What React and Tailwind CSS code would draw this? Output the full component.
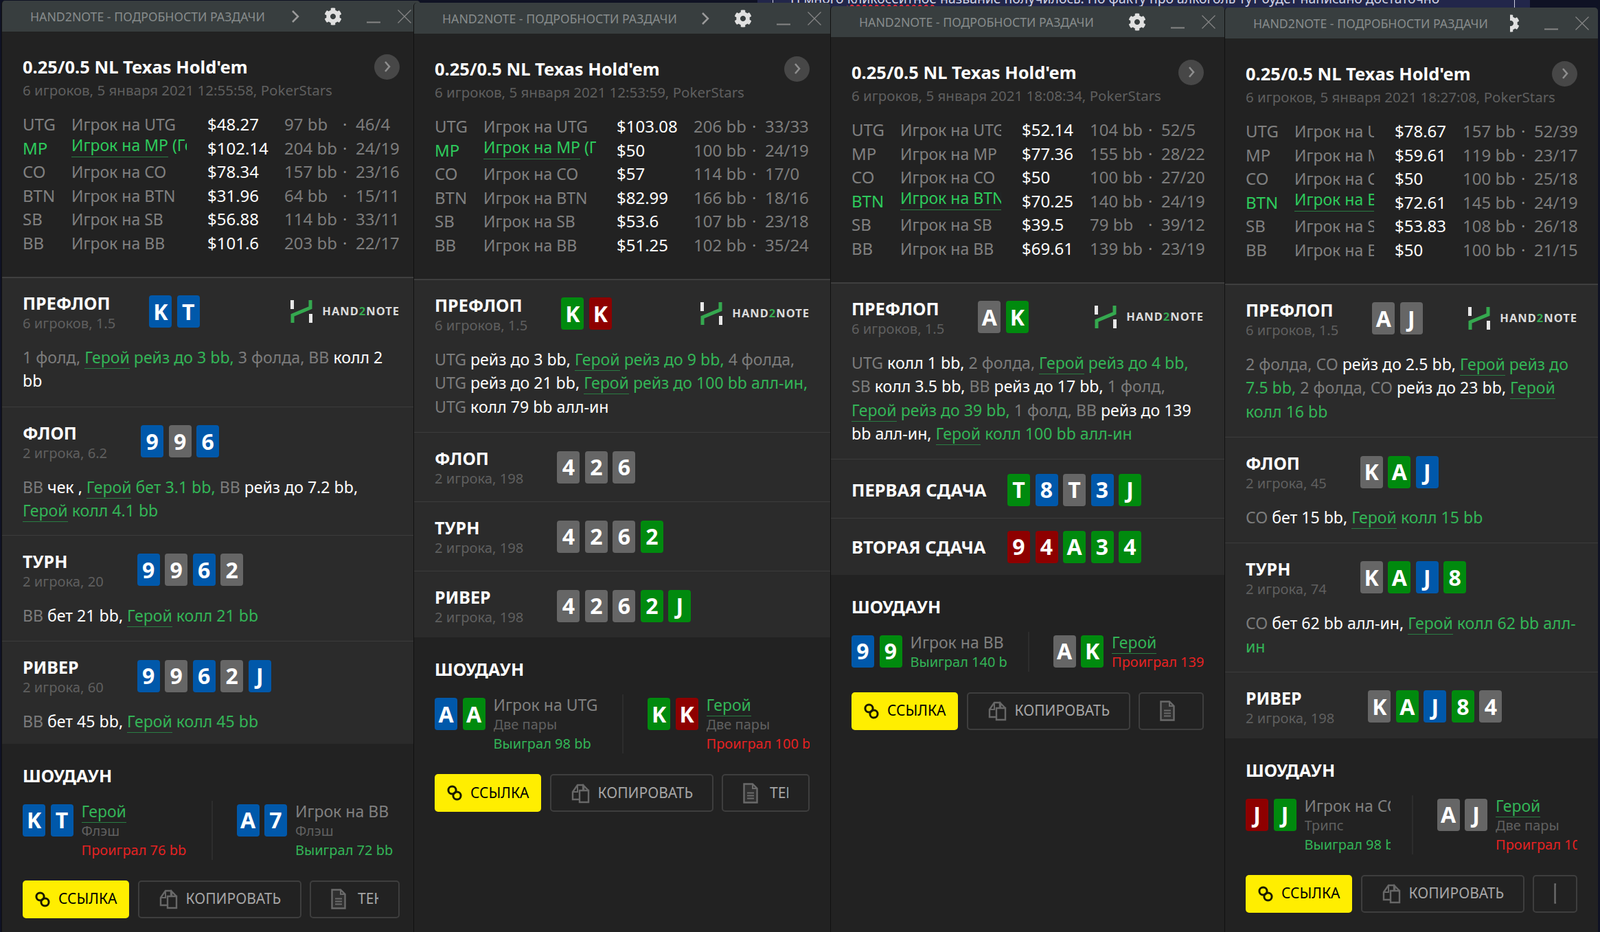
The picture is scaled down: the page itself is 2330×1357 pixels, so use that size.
import React from 'react';
import { FaCog } from 'react-icons/fa';

const BG = { b: 'bg-[#0058aa]', g: 'bg-[#666666]', v: 'bg-[#008a0e]', r: 'bg-[#8e0000]' };

function Card({ c }) {
  const [t, k] = c.split(':');
  return (
    <div className={`w-[33px] h-[47px] shrink-0 rounded-[4px] flex items-center justify-center text-white font-bold text-[32px] font-['DejaVu_Sans',sans-serif] ${BG[k]}`}>{t}</div>
  );
}

function Cards({ list }) {
  return (
    <div className="flex gap-[7.5px]">
      {list.map((c, i) => <Card key={i} c={c} />)}
    </div>
  );
}

function Logo() {
  return (
    <div className="ml-auto flex items-center gap-[14px]">
      <svg width="32" height="33" viewBox="0 0 32 33" className="shrink-0">
        <rect x="0" y="0" width="5" height="13" fill="#e8e8e8" />
        <rect x="27" y="20" width="5" height="13" fill="#e8e8e8" />
        <path d="M3 33 V22 L29 11 V0" fill="none" stroke="#35a84f" strokeWidth="5" />
      </svg>
      <span className="font-['DejaVu_Sans',sans-serif] font-bold text-[16.5px] tracking-[1px] text-[#dcdcdc] whitespace-nowrap">HAND<span className="text-[#35a84f]">2</span>NOTE</span>
    </div>
  );
}

function Chain() {
  return (
    <svg width="22" height="23" viewBox="0 0 22 23" className="shrink-0">
      <g fill="none" stroke="#1a1a00" strokeWidth="3">
        <circle cx="7.5" cy="7.5" r="5.6" />
        <circle cx="14.5" cy="15.5" r="5.6" />
      </g>
    </svg>
  );
}

function CopyIcon() {
  return (
    <svg width="27" height="30" viewBox="0 0 27 30" className="shrink-0">
      <path d="M2 13 L9 3 H17 V24 H2 Z" fill="none" stroke="#686868" strokeWidth="2.4" />
      <path d="M9 3 V13 H2" fill="none" stroke="#686868" strokeWidth="2" />
      <path d="M12 11 H18 L25 11 V28 H12 Z" fill="#222222" stroke="#686868" strokeWidth="2.4" />
      <path d="M18 11 V4 L25 11" fill="none" stroke="#686868" strokeWidth="2.4" />
    </svg>
  );
}

function DocIcon() {
  return (
    <svg width="22" height="30" viewBox="0 0 22 30" className="shrink-0">
      <path d="M1.5 1.5 H14 L20.5 8 V28.5 H1.5 Z" fill="#303030" stroke="#6a6a6a" strokeWidth="2.4" />
      <path d="M14 1.5 V8 H20.5" fill="none" stroke="#6a6a6a" strokeWidth="2" />
      <path d="M6 14.5 H16 M6 18.5 H16 M6 22.5 H16" stroke="#6a6a6a" strokeWidth="2" />
    </svg>
  );
}

function Actions({ parts }) {
  const cls = { g: 'text-[#7c7c7c]', w: 'text-white', h: 'text-[#33b557]' };
  return (
    <div className="mt-[20px] text-[23.1px] leading-[34.5px]">
      {parts.map(([k, t], i) =>
        k === 'hero'
          ? <span key={i} className="text-[#33b557] border-b border-[#2a7d43]">{t}</span>
          : <span key={i} className={cls[k]}>{t}</span>
      )}
    </div>
  );
}

function Section({ s, first }) {
  return (
    <div className={`bg-[#2b2b2b] ${first ? 'border-t-2 border-[#3f3f3f] pt-[20px]' : 'border-t border-[#3c3c3c]'} ${s.pt || ''} ${s.pb}`}>
      {s.sub ? (
        <div className="flex items-center h-[58px] gap-[49px]">
          <div>
            <div className="text-[25px] leading-[32px] font-bold text-white whitespace-nowrap">{s.title}</div>
            <div className="text-[20.2px] leading-[26px] text-[#5f5f5f] whitespace-nowrap">{s.sub}</div>
          </div>
          <Cards list={s.cards} />
          {first && <Logo />}
        </div>
      ) : (
        <div className="flex items-center">
          <div className="w-[227px] text-[25.5px] font-bold text-white whitespace-nowrap">{s.title}</div>
          <Cards list={s.cards} />
        </div>
      )}
      {s.actions && <Actions parts={s.actions} />}
    </div>
  );
}

function Player({ p, right }) {
  return (
    <div className={`flex min-w-0 ${right ? 'pl-[35px] border-l-2 border-[#2d2d2d]' : 'pr-[31px]'}`}>
      <div className="flex gap-[7.5px] mt-[5px] self-start">
        {p.cards.map((c, i) => <Card key={i} c={c} />)}
      </div>
      <div className="ml-[12px] min-w-0 flex-1 overflow-hidden whitespace-nowrap">
        <div className="text-[23px] leading-[30px] text-[#808080]">
          {p.hero ? <span className="text-[#33b557] border-b border-[#2a7d43]">Герой</span> : p.name}
        </div>
        {p.hand && <div className="text-[20px] leading-[28px] text-[#606060]">{p.hand}</div>}
        <div className={`text-[20px] leading-[28px] ${p.win ? 'text-[#33b557]' : 'text-[#e52222]'}`}>{p.res}</div>
      </div>
    </div>
  );
}

function Panel({ d }) {
  return (
    <div className={`${d.cls} flex flex-col bg-[#222222] rounded-t-[5px] overflow-hidden font-['Roboto',sans-serif] border-l border-[#111111]`}>
      <div className="h-[45px] shrink-0 flex items-center pt-px pl-[41px] pr-[13px] bg-[#383e3f]">
        <div className="text-[17.7px] text-[#878c8c] whitespace-nowrap">HAND2NOTE - ПОДРОБНОСТИ РАЗДАЧИ</div>
        <div className="flex-1" />
        {d.chevron && (
          <svg width="12" height="20" viewBox="0 0 12 20" className="shrink-0 mr-[36px]">
            <path d="M2 2 L10 10 L2 18" fill="none" stroke="#9a9a9a" strokeWidth="2.5" />
          </svg>
        )}
        <div className={`flex justify-end overflow-hidden shrink-0 mr-[36px] ${d.gearCut ? 'w-[14px] ml-[12px]' : 'w-[26px]'}`}>
          <FaCog className="shrink-0 text-[26px] text-[#e0e0e0]" />
        </div>
        <svg width="20" height="20" viewBox="0 0 20 20" className="shrink-0 mr-[25px]">
          <path d="M0 18.5 H20" stroke="#858585" strokeWidth="1.8" />
        </svg>
        <svg width="20" height="20" viewBox="0 0 20 20" className="shrink-0">
          <path d="M0.5 0.5 L19.5 19.5 M19.5 0.5 L0.5 19.5" stroke="#858585" strokeWidth="1.3" />
        </svg>
      </div>

      <div className="px-[30px] pt-[33px] pb-[31px]">
        <div className="flex items-center justify-between h-[36px]">
          <div className="text-[25.5px] font-bold text-white whitespace-nowrap">0.25/0.5 NL Texas Hold'em</div>
          <div className="w-[37px] h-[37px] rounded-full bg-[#474747] flex items-center justify-center">
            <svg width="12" height="20" viewBox="0 0 12 20"><path d="M3 3 L9 10 L3 17" fill="none" stroke="#8e8e8e" strokeWidth="2.6" /></svg>
          </div>
        </div>
        <div className="text-[20.5px] leading-[32px] text-[#5f5f5f] whitespace-nowrap">{d.sub}</div>
        <div className="mt-[17px] text-[24px]">
          {d.rows.map((r, i) => {
            const hero = i === d.heroRow;
            return (
              <div key={i} className={`grid h-[34.6px] leading-[34.6px] whitespace-nowrap ${d.cols}`}>
                <div className={hero ? 'text-[#2ecb5c]' : 'text-[#808080]'}>{r[0]}</div>
                {hero ? (
                  <div className="mr-[30px] -mt-[5px] h-[36px] overflow-hidden text-[23px] text-[#2ecb5c]">
                    <span className="border-b border-[#2a7d43] pb-px">Игрок на {r[0]}</span> (Герой)
                  </div>
                ) : (
                  <div className="mr-[30px] overflow-hidden text-[23px] text-[#808080]">Игрок на {r[0]}</div>
                )}
                <div className="text-white">{r[1]}</div>
                <div className="text-[#7c7c7c]">{r[2]}</div>
                <div className="text-[#8a8a8a]">·</div>
                <div className="text-[#7c7c7c]">{r[3]}</div>
              </div>
            );
          })}
        </div>
      </div>

      {d.sections.map((s, i) => (
        <div key={i} className="px-0">
          <Section s={{ ...s, pb: `${s.pb} px-[30px]`, pt: i === 0 ? '' : (s.pt || 'pt-[21px]') }} first={i === 0} />
        </div>
      ))}

      <div className="px-[30px] pt-[30px]">
        <div className="text-[25px] leading-[32px] font-bold text-white">ШОУДАУН</div>
        <div className="grid grid-cols-2 mt-[21px]">
          <Player p={d.show[0]} />
          <Player p={d.show[1]} right />
        </div>
        <div className="flex gap-[12.5px] mt-[30px] h-[55px] text-[21px]">
          <div className="w-[155px] shrink-0 rounded-[5px] bg-[#ffee00] text-black flex items-center pl-[18px] gap-[12px]">
            <Chain />
            <span>ССЫЛКА</span>
          </div>
          <div className="w-[238px] shrink-0 rounded-[5px] border-2 border-[#3e3e3e] text-[#a6a6a6] flex items-center pl-[29px] gap-[12px]">
            <CopyIcon />
            <span>КОПИРОВАТЬ</span>
          </div>
          <div className="flex-1 min-w-0 rounded-[5px] border-2 border-[#3e3e3e] text-[#a6a6a6] flex items-center px-[29px]">
            <div className="flex items-center gap-[17px] overflow-hidden whitespace-nowrap">
              <DocIcon />
              <span>ТЕКСТ</span>
            </div>
          </div>
        </div>
      </div>
    </div>
  );
}

const h = t => ['hero', t];
const g = t => ['g', t];
const w = t => ['w', t];
const v = t => ['h', t];

const panels = [
  {
    cls: 'w-[610px] shrink-0 mt-[1px] ml-[2px]',
    chevron: true,
    sub: '6 игроков, 5 января 2021 12:55:58, PokerStars',
    heroRow: 1,
    cols: 'grid-cols-[71px_198px_112px_85px_19px_1fr]',
    rows: [['UTG', '$48.27', '97 bb', '46/4'], ['MP', '$102.14', '204 bb', '24/19'], ['CO', '$78.34', '157 bb', '23/16'], ['BTN', '$31.96', '64 bb', '15/11'], ['SB', '$56.88', '114 bb', '33/11'], ['BB', '$101.6', '203 bb', '22/17']],
    sections: [
      { title: 'ПРЕФЛОП', sub: '6 игроков, 1.5', cards: ['K:b', 'T:b'], pb: 'pb-[20px]', actions: [g('1 фолд, '), h('Герой'), v(' рейз до 3 bb, '), g('3 фолда, BB '), w('колл 2 bb')] },
      { title: 'ФЛОП', sub: '2 игрока, 6.2', cards: ['9:b', '9:g', '6:b'], pb: 'pb-[18px]', actions: [g('BB '), w('чек , '), h('Герой'), v(' бет 3.1 bb, '), g('BB '), w('рейз до 7.2 bb, '), h('Герой'), v(' колл 4.1 bb')] },
      { title: 'ТУРН', sub: '2 игрока, 20', cards: ['9:b', '9:g', '6:b', '2:g'], pb: 'pb-[20px]', actions: [g('BB '), w('бет 21 bb, '), h('Герой'), v(' колл 21 bb')] },
      { title: 'РИВЕР', sub: '2 игрока, 60', cards: ['9:b', '9:g', '6:b', '2:g', 'J:b'], pb: 'pb-[15px]', actions: [g('BB '), w('бет 45 bb, '), h('Герой'), v(' колл 45 bb')] },
    ],
    show: [
      { cards: ['K:b', 'T:b'], hero: true, hand: 'Флэш', res: 'Проиграл 76 bb' },
      { cards: ['A:b', '7:b'], name: 'Игрок на BB', hand: 'Флэш', res: 'Выиграл 72 bb', win: true },
    ],
  },
  {
    cls: 'w-[607px] shrink-0 mt-[4px] -ml-[10px] relative z-10',
    chevron: true,
    sub: '6 игроков, 5 января 2021 12:53:59, PokerStars',
    heroRow: 1,
    cols: 'grid-cols-[71px_194px_112px_85px_19px_1fr]',
    rows: [['UTG', '$103.08', '206 bb', '33/33'], ['MP', '$50', '100 bb', '24/19'], ['CO', '$57', '114 bb', '17/0'], ['BTN', '$82.99', '166 bb', '18/16'], ['SB', '$53.6', '107 bb', '23/18'], ['BB', '$51.25', '102 bb', '35/24']],
    sections: [
      { title: 'ПРЕФЛОП', sub: '6 игроков, 1.5', cards: ['K:v', 'K:r'], pb: 'pb-[20px]', actions: [g('UTG '), w('рейз до 3 bb, '), h('Герой'), v(' рейз до 9 bb, '), g('4 фолда, UTG '), w('рейз до 21 bb, '), h('Герой'), v(' рейз до 100 bb алл-ин, '), g('UTG '), w('колл 79 bb алл-ин')] },
      { title: 'ФЛОП', sub: '2 игрока, 198', cards: ['4:g', '2:g', '6:g'], pb: 'pb-[21px]' },
      { title: 'ТУРН', sub: '2 игрока, 198', cards: ['4:g', '2:g', '6:g', '2:v'], pb: 'pb-[21px]' },
      { title: 'РИВЕР', sub: '2 игрока, 198', cards: ['4:g', '2:g', '6:g', '2:v', 'J:v'], pb: 'pb-[17px]' },
    ],
    show: [
      { cards: ['A:b', 'A:v'], name: 'Игрок на UTG', hand: 'Две пары', res: 'Выиграл 98 bb', win: true },
      { cards: ['K:v', 'K:r'], hero: true, hand: 'Две пары', res: 'Проиграл 100 bb' },
    ],
  },
  {
    cls: 'w-[574px] shrink-0 mt-[9px] ml-[0px] relative z-20',
    sub: '6 игроков, 5 января 2021 18:08:34, PokerStars',
    heroRow: 3,
    cols: 'grid-cols-[71px_177px_99px_85px_19px_1fr]',
    rows: [['UTG', '$52.14', '104 bb', '52/5'], ['MP', '$77.36', '155 bb', '28/22'], ['CO', '$50', '100 bb', '27/20'], ['BTN', '$70.25', '140 bb', '24/19'], ['SB', '$39.5', '79 bb', '39/12'], ['BB', '$69.61', '139 bb', '23/19']],
    sections: [
      { title: 'ПРЕФЛОП', sub: '6 игроков, 1.5', cards: ['A:g', 'K:v'], pb: 'pb-[19px]', actions: [g('UTG '), w('колл 1 bb, '), g('2 фолда, '), h('Герой'), v(' рейз до 4 bb, '), g('SB '), w('колл 3.5 bb, '), g('BB '), w('рейз до 17 bb, '), g('1 фолд, '), h('Герой'), v(' рейз до 39 bb, '), g('1 фолд, BB '), w('рейз до 139 bb алл-ин, '), h('Герой'), v(' колл 100 bb алл-ин')] },
      { title: 'ПЕРВАЯ СДАЧА', cards: ['T:v', '8:b', 'T:g', '3:b', 'J:v'], pb: 'pb-[17px]' },
      { title: 'ВТОРАЯ СДАЧА', cards: ['9:r', '4:r', 'A:v', '3:v', '4:v'], pt: 'pt-[18px]', pb: 'pb-[17px]' },
    ],
    show: [
      { cards: ['9:b', '9:v'], name: 'Игрок на BB', res: 'Выиграл 140 bb', win: true },
      { cards: ['A:g', 'K:v'], hero: true, res: 'Проиграл 139 bb' },
    ],
  },
  {
    cls: 'w-[544px] shrink-0 mt-[11px] relative z-30',
    gearCut: true,
    sub: '6 игроков, 5 января 2021 18:27:08, PokerStars',
    heroRow: 3,
    cols: 'grid-cols-[71px_146px_99px_85px_19px_1fr]',
    rows: [['UTG', '$78.67', '157 bb', '52/39'], ['MP', '$59.61', '119 bb', '23/17'], ['CO', '$50', '100 bb', '25/18'], ['BTN', '$72.61', '145 bb', '24/19'], ['SB', '$53.83', '108 bb', '26/18'], ['BB', '$50', '100 bb', '21/15']],
    sections: [
      { title: 'ПРЕФЛОП', sub: '6 игроков, 1.5', cards: ['A:g', 'J:g'], pb: 'pb-[20px]', actions: [g('2 фолда, CO '), w('рейз до 2.5 bb, '), h('Герой'), v(' рейз до 7.5 bb, '), g('2 фолда, CO '), w('рейз до 23 bb, '), h('Герой'), v(' колл 16 bb')] },
      { title: 'ФЛОП', sub: '2 игрока, 45', cards: ['K:g', 'A:v', 'J:b'], pb: 'pb-[19px]', actions: [g('CO '), w('бет 15 bb, '), h('Герой'), v(' колл 15 bb')] },
      { title: 'ТУРН', sub: '2 игрока, 74', cards: ['K:g', 'A:v', 'J:b', '8:v'], pb: 'pb-[19px]', actions: [g('CO '), w('бет 62 bb алл-ин, '), h('Герой'), v(' колл 62 bb алл-ин')] },
      { title: 'РИВЕР', sub: '2 игрока, 198', cards: ['K:g', 'A:v', 'J:b', '8:v', '4:g'], pb: 'pb-[17px]' },
    ],
    show: [
      { cards: ['J:r', 'J:v'], name: 'Игрок на CO', hand: 'Трипс', res: 'Выиграл 98 bb', win: true },
      { cards: ['A:g', 'J:g'], hero: true, hand: 'Две пары', res: 'Проиграл 100 bb' },
    ],
  },
];

export default function App() {
  return (
    <div className="relative w-[2330px] h-[1357px] overflow-hidden bg-[#0f1224] flex">
      <div className="absolute top-0 left-[1103px] w-[1125px] h-[14px] bg-[#22264a] overflow-hidden font-['Roboto',sans-serif]">
        <div className="absolute left-[22px] top-0 h-[14px] w-px bg-[#cfcfe0]" />
        <div className="absolute left-[1102px] top-0 h-[14px] w-px bg-[#cfcfe0]" />
        <div className="absolute left-[48px] -top-[17px] text-[19.4px] leading-[30px] text-[#d2d4e6] whitespace-nowrap">
          Н много <span className="underline decoration-wavy decoration-red-500">кликосейтное</span> название получилось. По факту про алкоголь тут будет написано достаточно
        </div>
      </div>
      {panels.map((d, i) => <Panel key={i} d={d} />)}
    </div>
  );
}
